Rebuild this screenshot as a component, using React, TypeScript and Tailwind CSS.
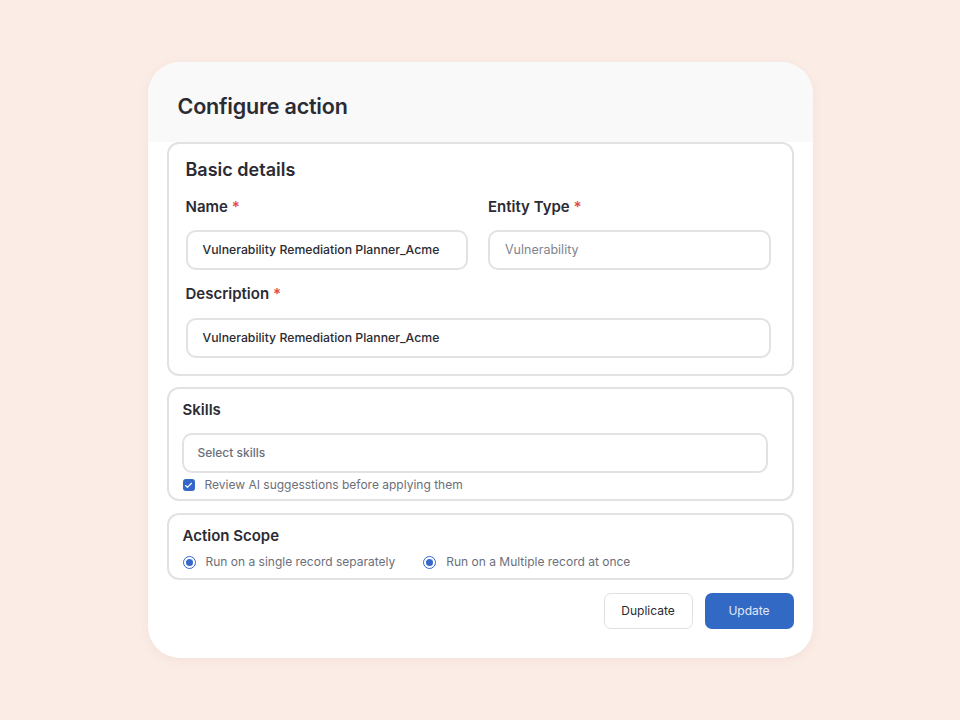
import { Check } from "lucide-react";

function Label({ text }: { text: string }) {
  return (
    <div className="text-[15px] font-semibold text-[#2b2b33] leading-5">
      {text} <span className="text-[#e5484d]">*</span>
    </div>
  );
}

function Field({ value, muted }: { value: string; muted?: boolean }) {
  return (
    <div
      className={`h-[40px] flex items-center px-[15px] rounded-[10px] border-2 border-[#e2e2e2] bg-white whitespace-nowrap ${
        muted ? "text-[12.5px] text-[#80848e]" : "text-[12.25px] font-medium text-[#2b2b33]"
      }`}
    >
      {value}
    </div>
  );
}

function Radio({ label }: { label: string }) {
  return (
    <div className="flex items-center gap-[10px]">
      <span className="w-[13px] h-[13px] rounded-full border-[1.5px] border-[#3467c8] flex items-center justify-center">
        <span className="w-[7px] h-[7px] rounded-full bg-[#3467c8]" />
      </span>
      <span className="text-[12px] text-[#6b6f7a]">{label}</span>
    </div>
  );
}

export default function App() {
  return (
    <div
      className="min-h-[720px] bg-[#fbece6] flex justify-center pt-[62px]"
      style={{ fontFamily: "Inter, 'Noto Sans', sans-serif" }}
    >
      <div className="w-[665px] h-[596px] bg-white rounded-[32px] overflow-hidden shadow-[0_2px_10px_rgba(200,160,150,0.15)] flex flex-col">
        <div className="h-[80px] shrink-0 bg-[#f9f9f9] flex items-center pl-[30px] pt-[9px]">
          <h1 className="text-[21.5px] font-semibold text-[#2b2b33] tracking-[-0.2px]">Configure action</h1>
        </div>

        <div className="flex flex-col pl-[19px] pr-[19px]">
          {/* Basic details */}
          <div className="h-[234px] shrink-0 border-2 border-[#e2e2e2] rounded-[12px] pl-[17px] pr-[21px] pt-[14px] bg-white">
            <div className="text-[18px] font-semibold text-[#2b2b33] leading-6">Basic details</div>
            <div className="grid grid-cols-2 gap-5 mt-[15px]">
              <div className="flex flex-col gap-[13px]">
                <Label text="Name" />
                <Field value="Vulnerability Remediation Planner_Acme" />
              </div>
              <div className="flex flex-col gap-[13px]">
                <Label text="Entity Type" />
                <Field value="Vulnerability" muted />
              </div>
            </div>
            <div className="flex flex-col gap-[14px] mt-[14px]">
              <Label text="Description" />
              <Field value="Vulnerability Remediation Planner_Acme" />
            </div>
          </div>

          {/* Skills */}
          <div className="h-[114px] shrink-0 mt-[11px] border-2 border-[#e2e2e2] rounded-[12px] pl-[13px] pr-6 pt-[11px]">
            <div className="text-[15px] font-semibold text-[#2b2b33] leading-5 pl-[1px]">Skills</div>
            <div className="mt-[13px] h-[40px] flex items-center px-[14px] rounded-[10px] border-2 border-[#e2e2e2] text-[12px] font-medium text-[#6b6f7a]">
              Select skills
            </div>
            <div className="flex items-center gap-[10px] mt-[3px] pl-[1px]">
              <span className="w-[12px] h-[12px] rounded-[3px] bg-[#3467c8] flex items-center justify-center">
                <Check size={9} strokeWidth={3} color="white" />
              </span>
              <span className="text-[12px] text-[#6b6f7a]">Review AI suggesstions before applying them</span>
            </div>
          </div>

          {/* Action scope */}
          <div className="h-[67px] shrink-0 mt-[12px] border-2 border-[#e2e2e2] rounded-[12px] pl-[14px] pt-[11px]">
            <div className="text-[15px] font-semibold text-[#2b2b33] leading-5">Action Scope</div>
            <div className="flex items-center gap-[28px] mt-[7px]">
              <Radio label="Run on a single record separately" />
              <Radio label="Run on a Multiple record at once" />
            </div>
          </div>

          <div className="flex justify-end gap-3 mt-[13px]">
            <button className="w-[89px] h-[36px] rounded-[7px] border border-[#e0e0e0] bg-white text-[12px] text-[#2b2b33]">
              Duplicate
            </button>
            <button className="w-[89px] h-[36px] rounded-[7px] bg-[#3169c4] text-[12px] text-white/85">
              Update
            </button>
          </div>
        </div>
      </div>
    </div>
  );
}
